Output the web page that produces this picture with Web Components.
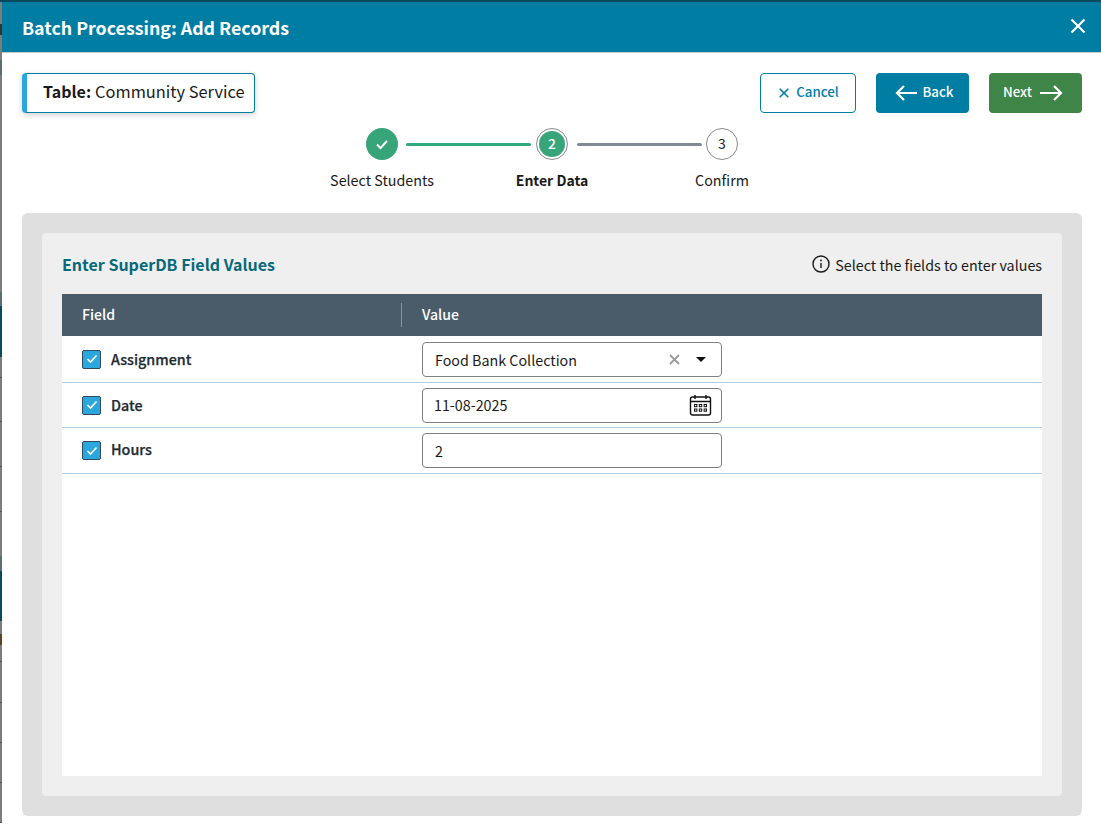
<!DOCTYPE html>
<html><head><meta charset="utf-8"><style>
html,body{margin:0;height:100%;background:#fff;overflow:hidden}
body{font-family:"Noto Sans CJK SC","Noto Sans",sans-serif;color:#1a1a1a}
</style></head><body>
<batch-dialog>
<span slot="title">Batch Processing: Add Records</span>
<table-chip slot="chip" label="Table:" value="Community Service"></table-chip>
<action-btn slot="actions" kind="cancel">Cancel</action-btn>
<action-btn slot="actions" kind="back">Back</action-btn>
<action-btn slot="actions" kind="next">Next</action-btn>
<step-bar slot="steps"></step-bar>
<field-panel slot="panel">
<field-row label="Assignment" kind="select" value="Food Bank Collection"></field-row>
<field-row label="Date" kind="date" value="11-08-2025"></field-row>
<field-row label="Hours" kind="text" value="2"></field-row>
</field-panel>
</batch-dialog>
<script>
function def(name,html){customElements.define(name,class extends HTMLElement{constructor(){super();this.attachShadow({mode:'open'}).innerHTML=typeof html==='function'?html(this):html;}});}
const G='#7d7d7d',T='#0b4a5e',D='#5d6b75';
const strip=[[0,2,T],[2,24,G],[24,35,'#333'],[35,60,G],[60,75,D],[75,292,G],[292,306,D],[306,357,T],[357,377,G],[377,378,'#555'],[378,421,G],[421,422,'#555'],[422,466,G],[466,467,'#555'],[467,511,G],[511,512,'#555'],[512,556,G],[556,571,D],[571,621,T],[621,634,G],[634,645,'#5a4520'],[645,661,G],[661,662,'#555'],[662,702,G],[702,703,'#555'],[703,742,G],[742,743,'#555'],[743,782,G],[782,783,'#555'],[783,822,G],[822,823,'#555'],[823,826,'#fff']].map(([a,b,c])=>`${c} ${a}px ${b}px`).join(',');
def('batch-dialog',`<style>
:host{display:flex;flex-direction:column;height:826px;padding:2px 0 0 2px;box-sizing:border-box;background:linear-gradient(${T} 0 2px,transparent 2px),linear-gradient(${strip}) left top/2px 100% no-repeat,#fff}
.d{flex:1;background:#fff;display:flex;flex-direction:column;min-height:0}
header{height:50px;background:#007da3;color:#fff;display:flex;align-items:center;justify-content:space-between;padding:0 15px 0 20px;font-size:17.8px;font-weight:700;box-shadow:0 1px 0 #c8c8c8;flex:none}
header svg{display:block;margin-bottom:3px}
.top{display:flex;justify-content:space-between;padding:21px 19px 0 20px;height:40px;flex:none}
.acts{display:flex;gap:20px}
.steps{display:flex;justify-content:center;height:100px;flex:none}
.panel{flex:1;margin:0 19px 10px 20px;min-height:0;display:flex}
::slotted([slot=panel]){flex:1}
</style><div class="d"><header><div class="tt"><slot name="title"></slot></div><svg width="16" height="16" viewBox="0 0 16 16"><path d="M1.5 1.5l13 13M14.5 1.5l-13 13" stroke="#fff" stroke-width="2.2" fill="none"/></svg></header>
<div class="top"><slot name="chip"></slot><div class="acts"><slot name="actions"></slot></div></div>
<div class="steps"><slot name="steps"></slot></div>
<div class="panel"><slot name="panel"></slot></div></div>`);
def('table-chip',el=>`<style>
:host{display:block}
.c{box-sizing:border-box;height:40px;width:233px;border:1px solid #007da3;border-left:5px solid #2aa7dc;border-radius:4px;box-shadow:0 2px 6px rgba(0,0,0,.18);background:#fff;display:flex;align-items:center;padding:0 0 4px 16px;font-size:16.4px;white-space:nowrap;color:#1a1a1a}
b{font-weight:700;font-size:16px;margin-right:4px}
</style><div class="c"><b>${el.getAttribute('label')}</b><span>${el.getAttribute('value')}</span></div>`);
const btnIcons={cancel:`<svg width="10" height="10" viewBox="0 0 10 10"><path d="M.7.7l8.6 8.6M9.3.7L.7 9.3" stroke="#007da3" stroke-width="1.6" fill="none"/></svg>`,
back:`<svg width="22" height="16" viewBox="0 0 22 16"><path d="M22 8H2M9 1L2 8l7 7" stroke="#fff" stroke-width="2.2" fill="none"/></svg>`,
next:`<svg width="23" height="16" viewBox="0 0 23 16"><path d="M0 8h21M14 1l7 7-7 7" stroke="#fff" stroke-width="2.2" fill="none"/></svg>`};
def('action-btn',el=>{const k=el.getAttribute('kind');const w={cancel:96,back:93,next:93}[k];const st={cancel:'background:#fff;color:#007da3;border:1px solid #007da3;gap:7px;padding-left:2px',back:'background:#007da3;color:#fff;gap:5px;padding-left:4px',next:'background:#3e8547;color:#fff;gap:8px;padding-right:5px'}[k];
return `<style>:host{display:block}.b{box-sizing:border-box;width:${w}px;height:40px;border-radius:4px;display:flex;align-items:center;justify-content:center;font-size:13.3px;font-weight:500;${st}}.t{padding-bottom:3px}svg{display:block}</style><div class="b">${k==='next'?'<span class="t"><slot></slot></span>'+btnIcons[k]:btnIcons[k]+'<span class="t"><slot></slot></span>'}</div>`});
def('step-bar',`<style>
:host{display:block}
.w{display:flex;align-items:flex-start;margin-top:15px;margin-left:1px}
.dot{box-sizing:border-box;width:32px;height:32px;border-radius:50%;flex:none;display:flex;align-items:center;justify-content:center;font-size:14px}
.lab{font-size:14.3px;white-space:nowrap;margin-top:9px;line-height:22px}
.line{height:3px;width:125px;margin:15px 0 0;border-radius:2px;flex:none}
.g{width:170px;display:flex;justify-content:center}
.col{width:0;display:flex;flex-direction:column;align-items:center}
.n{padding-bottom:2px}
</style><div class="w">
<div class="col"><div class="dot" style="background:#38a47a"><svg width="14" height="11" viewBox="0 0 14 11"><path d="M2 5.5l3.5 3.5L12 2" stroke="#fff" stroke-width="2" fill="none"/></svg></div><div class="lab">Select Students</div></div>
<div class="g"><div class="line" style="background:#2fa97c;margin-left:3px"></div></div>
<div class="col"><div class="dot" style="border:1px solid #8a8a8a;background:#fff;padding:2px"><div style="width:26px;height:26px;border-radius:50%;background:#38a47a;color:#fff;display:flex;align-items:center;justify-content:center;font-weight:500;flex:none"><span class="n">2</span></div></div><div class="lab" style="font-weight:700;font-size:14px">Enter Data</div></div>
<div class="g"><div class="line" style="background:#7f8a96;margin-left:5px"></div></div>
<div class="col"><div class="dot" style="border:1px solid #8a8a8a;background:#fff"><span class="n">3</span></div><div class="lab">Confirm</div></div>
</div>`);
def('field-panel',`<style>
:host{display:flex;background:#dfdfdf;border-radius:6px;padding:20px;box-sizing:border-box;min-height:0}
.i{flex:1;background:#efefef;border-radius:4px;padding:0 20px 20px;display:flex;flex-direction:column;min-height:0}
.h{height:61px;display:flex;align-items:center;justify-content:space-between;flex:none}
h2{margin:0;font-size:16px;font-weight:700;color:#08697a}
.n{display:flex;align-items:center;gap:5px;font-size:14.3px;color:#1a1a1a}
.n span{padding-top:1px}
.t{flex:1;background:#fff;min-height:0}
.th{height:42px;background:#4a5b6a;color:#fff;display:flex;align-items:center;font-size:14.1px;font-weight:500}
.th .a{width:340px;padding-left:20px;box-sizing:border-box;border-right:1px solid #8795a1;height:24px;line-height:22px}
.th .b{padding-left:20px;line-height:22px;height:24px}
</style><div class="i"><div class="h"><h2>Enter SuperDB Field Values</h2><div class="n"><svg width="18" height="18" viewBox="0 0 18 18" style="margin-top:1px"><circle cx="9" cy="9" r="8" fill="none" stroke="#1a1a1a" stroke-width="1.4"/><path d="M9 8v5" stroke="#1a1a1a" stroke-width="1.4"/><circle cx="9" cy="5.5" r=".9" fill="#1a1a1a"/></svg><span>Select the fields to enter values</span></div></div>
<div class="t"><div class="th"><div class="a">Field</div><div class="b">Value</div></div><slot></slot></div></div>`);
const cal=`<svg width="23" height="22" viewBox="0 0 23 22"><rect x="1.5" y="3" width="20" height="18" rx="2" fill="none" stroke="#111" stroke-width="1.4"/><path d="M1.5 7.5h20M6 1v4M17 1v4" stroke="#111" stroke-width="1.4"/><g fill="none" stroke="#111" stroke-width="1"><rect x="5.5" y="10.5" width="2.4" height="2.2"/><rect x="10.3" y="10.5" width="2.4" height="2.2"/><rect x="15.1" y="10.5" width="2.4" height="2.2"/><rect x="5.5" y="15" width="2.4" height="2.2"/><rect x="10.3" y="15" width="2.4" height="2.2"/><rect x="15.1" y="15" width="2.4" height="2.2"/></g></svg>`;
def('field-row',el=>{const k=el.getAttribute('kind');const v=el.getAttribute('value');
const right=k==='select'?`<svg width="11" height="11" viewBox="0 0 11 11" style="margin-right:16px"><path d="M1 1l9 9M10 1l-9 9" stroke="#9a9a9a" stroke-width="1.8" fill="none"/></svg><svg width="10" height="5" viewBox="0 0 10 5" style="margin-right:15px;margin-top:1px"><path d="M0 0h10L5 5z" fill="#111"/></svg>`:k==='date'?`<span style="margin-right:9px;display:flex">${cal}</span>`:'';
const pad=k==='date'?11:12;
const h={select:47,date:45,text:46}[k];
const lp={select:2,date:2,text:4}[k];
return `<style>:host{display:block}
.r{box-sizing:border-box;height:${h}px;border-bottom:1px solid #b4cde0;display:flex;align-items:center}
.l{width:340px;display:flex;align-items:center;padding-left:20px;box-sizing:border-box;gap:10px;font-size:14.3px;font-weight:500;color:#222b33;-webkit-text-stroke:.25px #222b33}
.l span{padding-bottom:${lp}px}
.cb{box-sizing:border-box;width:19px;height:19px;background:#2aa7dc;border:1px solid #34495c;border-radius:2px;display:flex;align-items:center;justify-content:center}
.f{box-sizing:border-box;margin-left:20px;width:300px;height:35px;border:1px solid #808080;border-radius:4px;background:#fff;display:flex;align-items:center;font-size:14.3px;padding-left:${pad}px;color:#1a1a1a}
.f span.v{flex:1;padding-bottom:${k==='date'?2:0}px}
</style><div class="r"><div class="l"><div class="cb"><svg width="12" height="10" viewBox="0 0 12 10"><path d="M1.5 5l3 3 6-6.5" stroke="#fff" stroke-width="1.7" fill="none"/></svg></div><span>${el.getAttribute('label')}</span></div><div class="f"><span class="v">${v}</span>${right}</div></div>`});
</script>
</body></html>
